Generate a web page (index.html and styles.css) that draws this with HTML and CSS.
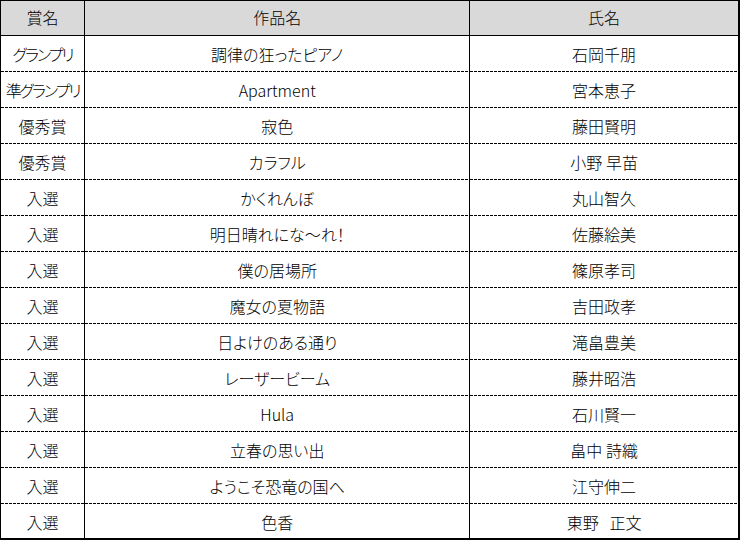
FILE: index.html
```html
<!DOCTYPE html>
<html lang="ja">
<head>
  <meta charset="UTF-8">
  <meta name="viewport" content="width=device-width, initial-scale=1.0">
  <title>入賞作品一覧</title>
  <link rel="stylesheet" href="styles.css">
</head>
<body>
  <table class="award-table">
    <colgroup>
      <col class="col-award">
      <col class="col-title">
      <col class="col-name">
    </colgroup>
    <thead>
      <tr>
        <th>賞名</th>
        <th>作品名</th>
        <th>氏名</th>
      </tr>
    </thead>
    <tbody>
      <tr><td class="kana">グランプリ</td><td>調律の狂ったピアノ</td><td>石岡千朋</td></tr>
      <tr><td class="kana">準グランプリ</td><td>Apartment</td><td>宮本恵子</td></tr>
      <tr><td>優秀賞</td><td>寂色</td><td>藤田賢明</td></tr>
      <tr><td>優秀賞</td><td>カラフル</td><td>小野 早苗</td></tr>
      <tr><td>入選</td><td>かくれんぼ</td><td>丸山智久</td></tr>
      <tr><td>入選</td><td>明日晴れにな～れ！</td><td>佐藤絵美</td></tr>
      <tr><td>入選</td><td>僕の居場所</td><td>篠原孝司</td></tr>
      <tr><td>入選</td><td>魔女の夏物語</td><td>吉田政孝</td></tr>
      <tr><td>入選</td><td>日よけのある通り</td><td>滝畠豊美</td></tr>
      <tr><td>入選</td><td>レーザービーム</td><td>藤井昭浩</td></tr>
      <tr><td>入選</td><td>Hula</td><td>石川賢一</td></tr>
      <tr><td>入選</td><td>立春の思い出</td><td>畠中 詩織</td></tr>
      <tr><td>入選</td><td>ようこそ恐竜の国へ</td><td>江守伸二</td></tr>
      <tr><td>入選</td><td>色香</td><td>東野&nbsp;&nbsp; 正文</td></tr>
    </tbody>
  </table>
</body>
</html>
```

FILE: styles.css
```css
* {
  box-sizing: border-box;
  margin: 0;
  padding: 0;
}

body {
  font-family: "Noto Sans CJK JP", "Noto Sans", sans-serif;
  font-size: 16px;
  font-weight: 300;
  color: #000;
  background-color: #fff;
}

.award-table {
  width: 740px;
  table-layout: fixed;
  border-collapse: separate;
  border-spacing: 0;
  border-top: 1px solid #000;
  border-left: 1px solid #000;
  font-feature-settings: "palt";
}

.col-award { width: 84px; }
.col-title { width: 384px; }
.col-name { width: 269px; }

.award-table th,
.award-table td {
  text-align: center;
  font-weight: 300;
  line-height: 20px;
  padding: 8px 0 0;
  vertical-align: top;
  white-space: nowrap;
  border-right: 1px solid #000;
}

.award-table th:last-child,
.award-table td:last-child {
  border-right-width: 2px;
}

/* header row */
.award-table th {
  height: 35px;
  padding-top: 6px;
  background-color: #d9d9d9;
  border-bottom: 1px solid #000;
}

/* dashed row separators, 3px on / 1px off */
.award-table td {
  height: 36px;
  background: repeating-linear-gradient(to right, #000 0 3px, transparent 3px 4px) left bottom / 100% 1px no-repeat;
}

.award-table tr:last-child td {
  background: none;
  border-bottom: 2px solid #000;
}

.award-table .kana {
  letter-spacing: -2px;
}
```
